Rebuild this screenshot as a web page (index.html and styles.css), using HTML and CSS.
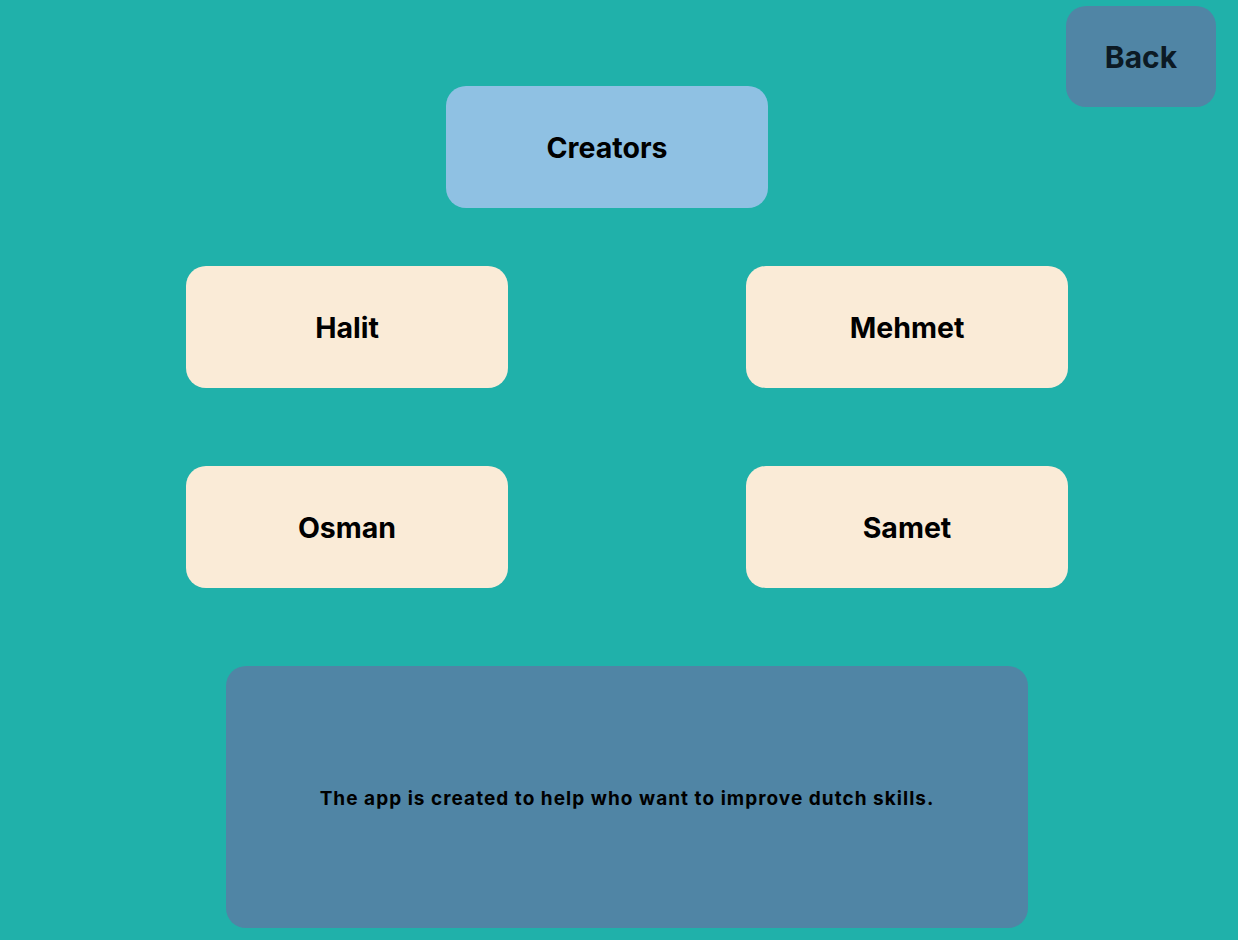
FILE: index.html
```html
<!DOCTYPE html>
<html>
<head>
<meta charset="utf-8">
<link rel="stylesheet" href="styles.css">
</head>
<body>
<div class="page">
  <div class="top">
    <div class="box title">Creators</div>
    <div class="box back">Back</div>
  </div>
  <div class="grid">
    <div class="box card">Halit</div>
    <div class="box card">Mehmet</div>
    <div class="box card">Osman</div>
    <div class="box card">Samet</div>
  </div>
  <div class="about">The app is created to help who want to improve dutch skills.</div>
</div>
</body>
</html>
```
FILE: styles.css
```css
html, body {
  margin: 0;
  padding: 0;
  background: #20b1aa;
}
body {
  font-family: Inter, "Noto Sans", sans-serif;
  font-weight: 700;
  color: #000;
  height: 940px;
  overflow: hidden;
}
.page {
  display: flex;
  flex-direction: column;
}
.box {
  display: flex;
  align-items: center;
  justify-content: center;
  border-radius: 20px;
  box-sizing: border-box;
  padding-top: 1px;
}
.top {
  display: flex;
  justify-content: space-between;
  align-items: flex-start;
  padding: 6px 22px 0 446px;
}
.title {
  margin-top: 80px;
  width: 322px;
  height: 122px;
  background: #8fc1e3;
  font-size: 28.5px;
}
.back {
  width: 150px;
  height: 101px;
  background: #5085a5;
  color: #0c1a24;
  font-size: 30px;
}
.grid {
  display: grid;
  grid-template-columns: 322px 322px;
  column-gap: 238px;
  row-gap: 78px;
  margin: 58px 0 0 186px;
}
.card {
  height: 122px;
  background: #faebd7;
  font-size: 28.5px;
}
.about {
  margin: 78px 0 0 226px;
  width: 802px;
  height: 262px;
  border-radius: 20px;
  background: #5085a5;
  display: flex;
  align-items: center;
  justify-content: center;
  font-size: 19px;
  letter-spacing: 1.03px;
  padding-top: 2px;
  box-sizing: border-box;
}
```
